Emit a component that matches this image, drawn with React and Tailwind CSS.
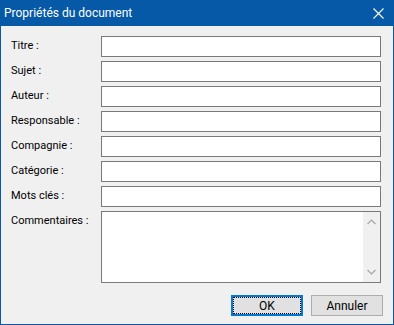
import React from "react";

const FIELDS = [
  "Titre :",
  "Sujet :",
  "Auteur :",
  "Responsable :",
  "Compagnie :",
  "Catégorie :",
  "Mots clés :",
];

function Chevron({ up }) {
  return (
    <svg width="9" height="6" viewBox="0 0 9 6">
      <path
        d={up ? "M0.5 5L4.5 1L8.5 5" : "M0.5 1L4.5 5L8.5 1"}
        fill="none"
        stroke="#a6a6a6"
        strokeWidth="1.2"
      />
    </svg>
  );
}

export default function App() {
  return (
    <div
      className="w-[394px] h-[325px] flex flex-col bg-[#f0f0f0] text-black"
      style={{ fontFamily: 'Roboto, "Liberation Sans", Arial, sans-serif' }}
    >
      {/* title bar */}
      <div className="h-[26px] shrink-0 bg-[#0559a6] flex items-center justify-between pl-[4px] pr-[10px]">
        <span className="text-white text-[12px]">Propriétés du document</span>
        <svg width="11" height="11" viewBox="0 0 11 11">
          <path d="M0.5 0.5L10.5 10.5M10.5 0.5L0.5 10.5" stroke="white" strokeWidth="1.1" />
        </svg>
      </div>

      <div className="flex-1 flex flex-col border-x border-b border-[#0559a6] pl-[10px] pr-[12px] pt-[10px] pb-[8px]">
        <div className="flex flex-col gap-[4px]">
          {FIELDS.map((label) => (
            <div key={label} className="flex h-[21px]">
              <div className="w-[90px] flex items-center text-[11px]">{label}</div>
              <div className="flex-1 border border-[#7a7a7a] bg-white" />
            </div>
          ))}
          <div className="flex h-[72px]">
            <div className="w-[90px] h-[21px] flex items-center text-[11px]">Commentaires :</div>
            <div className="flex-1 border border-[#7a7a7a] bg-white flex justify-end">
              <div className="w-[17px] bg-[#f0f0f0] flex flex-col items-center justify-between py-[7px]">
                <Chevron up />
                <Chevron />
              </div>
            </div>
          </div>
        </div>

        <div className="flex justify-end gap-[8px] mt-[12px] -mr-[2px]">
          <div className="w-[72px] h-[21px] border-2 border-[#0078d7] bg-[#e1e1e1]">
            <div className="w-full h-full border border-dotted border-black flex items-center justify-center text-[12px]">
              OK
            </div>
          </div>
          <div className="w-[72px] h-[21px] border border-[#adadad] bg-[#e1e1e1] flex items-center justify-center text-[12px]">
            Annuler
          </div>
        </div>
      </div>
    </div>
  );
}
